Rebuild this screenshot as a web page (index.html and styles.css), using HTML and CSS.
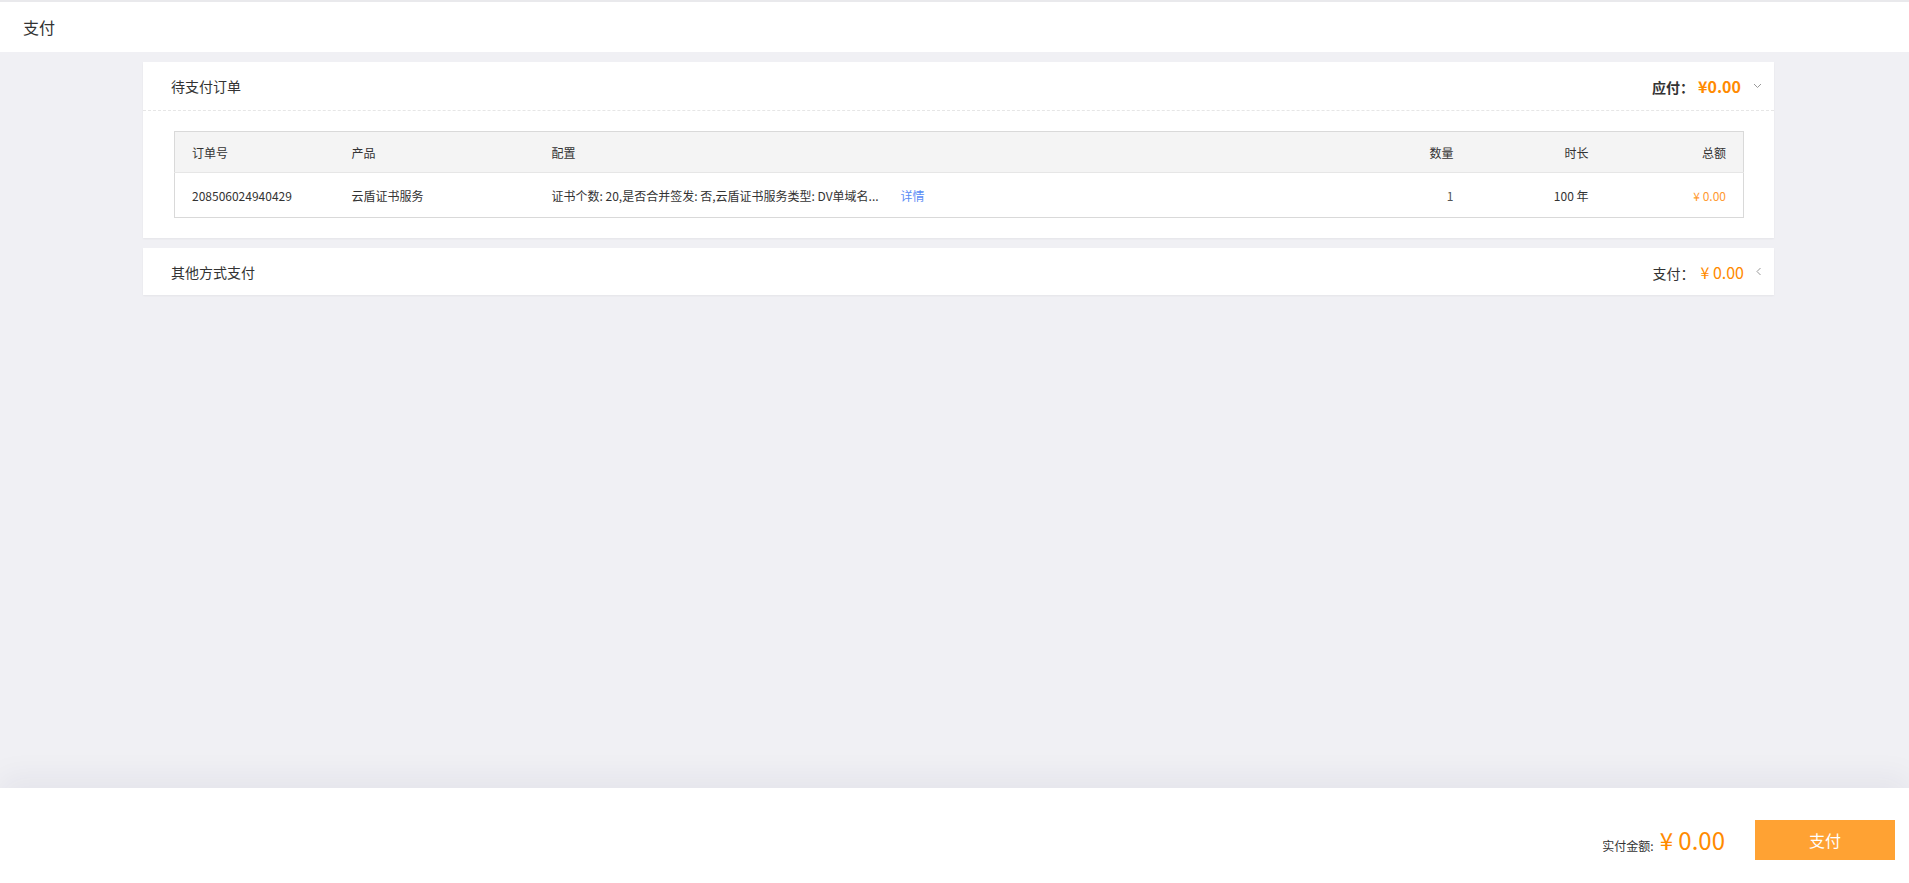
FILE: index.html
```html
<!DOCTYPE html>
<html lang="zh-CN">
<head>
    <meta charset="UTF-8">
    <meta name="viewport" content="width=device-width, initial-scale=1.0">
    <title>支付</title>
    <link rel="stylesheet" href="styles.css">
</head>
<body>
    <div class="topbar">支付</div>

    <div class="main">
        <div class="card">
            <div class="card-head dashed">
                <span class="card-title">待支付订单</span>
                <span class="sum strong">应付：<em>¥0.00</em></span>
                <svg class="chev" width="9" height="6" viewBox="0 0 9 6"><path d="M1 1l3.5 3.5L8 1" fill="none" stroke="#999" stroke-width="1"/></svg>
            </div>
            <div class="card-body">
                <table class="orders">
                    <colgroup>
                        <col style="width:160px">
                        <col style="width:200px">
                        <col>
                        <col style="width:136px">
                        <col style="width:135px">
                        <col style="width:138px">
                    </colgroup>
                    <thead>
                        <tr>
                            <th>订单号</th>
                            <th>产品</th>
                            <th>配置</th>
                            <th class="r">数量</th>
                            <th class="r">时长</th>
                            <th class="r">总额</th>
                        </tr>
                    </thead>
                    <tbody>
                        <tr>
                            <td>208506024940429</td>
                            <td>云盾证书服务</td>
                            <td><span class="conf">证书个数: 20,是否合并签发: 否,云盾证书服务类型: DV单域名...</span><a class="detail" href="#">详情</a></td>
                            <td class="r qty">1</td>
                            <td class="r">100 年</td>
                            <td class="r price">¥ 0.00</td>
                        </tr>
                    </tbody>
                </table>
            </div>
        </div>

        <div class="card">
            <div class="card-head">
                <span class="card-title">其他方式支付</span>
                <span class="sum">支付：<em>¥ 0.00</em></span>
                <svg class="chev" width="6" height="9" viewBox="0 0 6 9"><path d="M4.5 1L1 4.5 4.5 8" fill="none" stroke="#999" stroke-width="1"/></svg>
            </div>
        </div>
    </div>

    <div class="footer">
        <span class="pay-label">实付金额:</span>
        <span class="pay-amount">¥ 0.00</span>
        <button class="pay-btn">支付</button>
    </div>
</body>
</html>
```

FILE: styles.css
```css
html, body{
    margin: 0;
    height: 100%;
}
body{
    display: flex;
    flex-direction: column;
    background: #f0f0f4;
    color: #333;
    font-family: "Noto Sans CJK SC", "Noto Sans", sans-serif;
    font-size: 12px;
}

.topbar{
    height: 50px;
    border-top: 2px solid #e9e9ec;
    background: #fff;
    padding-left: 23px;
    font-size: 16px;
    line-height: 50px;
}

.main{
    flex: 1;
    padding: 10px 135px 0 143px;
    display: flex;
    flex-direction: column;
    gap: 10px;
}

.card{
    background: #fff;
    box-shadow: 0 1px 2px rgba(0,0,0,0.05);
}
.card-head{
    height: 47px;
    display: flex;
    align-items: center;
    padding: 0 12px 0 28px;
}
.card-head.dashed{
    height: 48px;
    border-bottom: 1px dashed #e6e6e6;
}
.card-title{
    flex: 1;
    font-size: 14px;
}
.sum{
    font-size: 14px;
}
.sum em{
    font-style: normal;
    font-size: 16px;
    margin-left: 6px;
    color: #ff8a00;
}
.sum.strong{
    font-weight: bold;
}
.sum.strong em{
    margin-left: 4px;
}
.chev{
    margin-left: 12px;
}

.card-body{
    padding: 20px 30px 20px 31px;
}

.orders{
    width: 100%;
    table-layout: fixed;
    border-collapse: collapse;
    border: 1px solid #d9d9d9;
}
.orders th{
    height: 40px;
    background: #f4f4f4;
    font-weight: normal;
    text-align: left;
    padding: 0 17px;
    border-bottom: 1px solid #e6e6e6;
}
.orders td{
    height: 44px;
    padding: 0 17px;
    white-space: nowrap;
}
.orders .r{
    text-align: right;
}
.detail{
    margin-left: 22px;
    color: #5a8cf5;
    text-decoration: none;
}
.qty{
    color: #555;
}
.price{
    color: #ff9a30;
}

.footer{
    height: 95px;
    box-sizing: border-box;
    padding: 8px 14px 0 0;
    background: #fff;
    display: flex;
    align-items: center;
    justify-content: flex-end;
    box-shadow: 0 -10px 30px rgba(40,40,80,0.06);
}
.pay-label{
    font-size: 12px;
    margin-top: 12px;
}
.pay-amount{
    margin-left: 6px;
    font-size: 24px;
    color: #ff8a00;
}
.pay-btn{
    margin-left: 30px;
    width: 140px;
    height: 40px;
    border: 0;
    background: #ffa233;
    color: #fff;
    font-family: inherit;
    font-size: 16px;
}
```
